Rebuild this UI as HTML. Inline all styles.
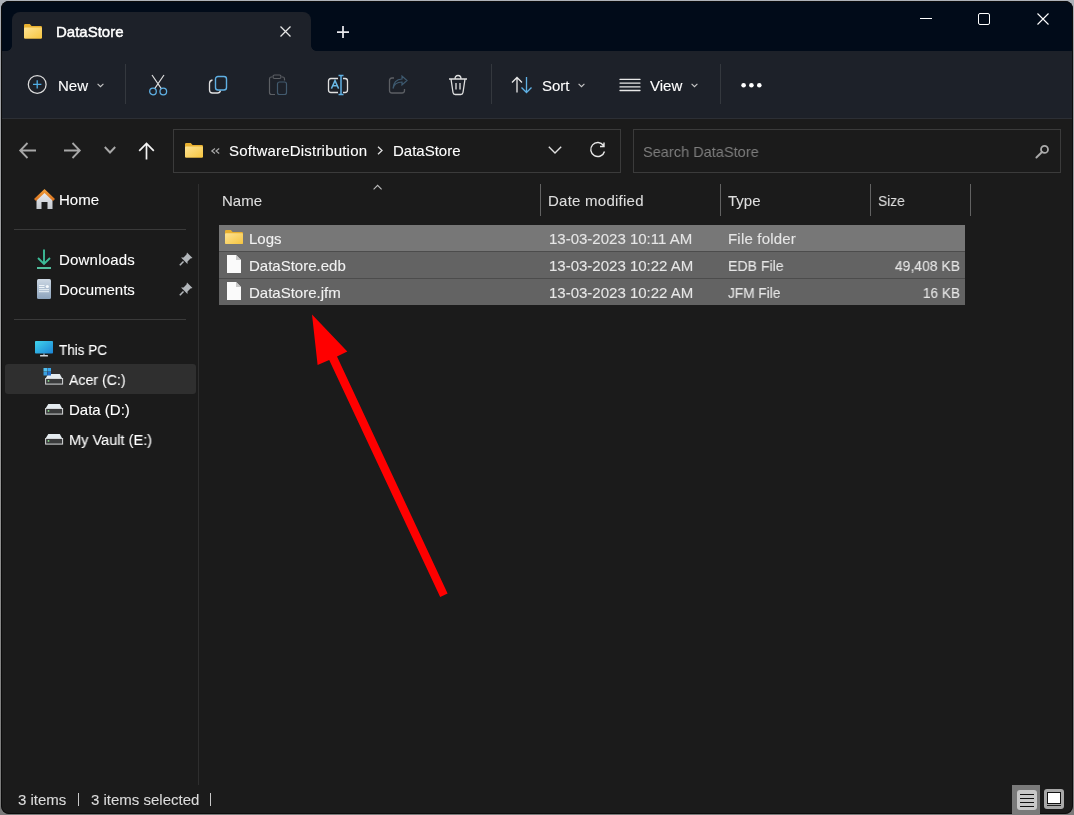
<!DOCTYPE html>
<html><head><meta charset="utf-8">
<style>
*{margin:0;padding:0;box-sizing:border-box}
html,body{width:1074px;height:815px;overflow:hidden;background:linear-gradient(#adb2b9 0,#a0a2a6 60px,#9a9a9a 400px,#7a7a7a 815px);font-family:"Liberation Sans",sans-serif}
#win{position:absolute;left:1px;top:1px;width:1072px;height:813px;border-radius:8px;overflow:hidden;background:#1b1b1b}
#title{position:absolute;left:0;top:0;width:1072px;height:50px;background:#010b19}
#tab{position:absolute;left:11px;top:11px;width:299px;height:39px;background:#1d2129;border-radius:8px 8px 0 0}
#cmd{position:absolute;left:0;top:50px;width:1072px;height:67px;background:#1d2129}
#cmdline{position:absolute;left:0;top:117px;width:1072px;height:1px;background:#2c2f35}
.t{position:absolute;white-space:nowrap;color:#fff;font-size:15px;line-height:18px;will-change:transform;-webkit-text-stroke:0.1px currentColor}
.sep{position:absolute;width:1px;background:#34383e}
svg{position:absolute;overflow:visible}
.box{position:absolute;border:1px solid #3b3b3b;background:#1b1b1b}
.hsep{position:absolute;height:1px;background:#3a3a3a}
.row{position:absolute;left:219px;width:746px;height:26px}
</style></head><body>
<div id="win">
  <div id="title"></div>
  <div id="tab"></div>
  <div id="cmd"></div>
  <div style="position:absolute;left:310px;top:45px;width:5px;height:5px;background:radial-gradient(circle at 100% 0,transparent 4.5px,#1d2129 5px)"></div>
  <div style="position:absolute;left:6px;top:45px;width:5px;height:5px;background:radial-gradient(circle at 0 0,transparent 4.5px,#1d2129 5px)"></div>
  <div id="cmdline"></div>
  <div style="position:absolute;left:0;top:0;width:1072px;height:813px;border-radius:8px;box-shadow:inset 0 0 0 1px #0c0c0c"></div>
</div>

<!-- tab folder icon -->
<svg style="left:24px;top:24px" width="18" height="14.5" viewBox="0 0 18 14.5">
  <path d="M0 1.2Q0 0 1.2 0H5.8L7.6 2H16.8Q18 2 18 3.2V13.3Q18 14.5 16.8 14.5H1.2Q0 14.5 0 13.3Z" fill="#e8b030"/>
  <rect x="0" y="3.4" width="18" height="11.1" rx="1" fill="url(#fg)"/>
</svg>
<div class="t" style="left:56px;top:23px;color:#fff;-webkit-text-stroke:0.45px #fff">DataStore</div>
<!-- tab close -->
<svg style="left:280px;top:25.5px" width="11" height="11" viewBox="0 0 11 11"><path d="M0.5 0.5L10.5 10.5M10.5 0.5L0.5 10.5" stroke="#e6e6e6" stroke-width="1.25"/></svg>
<!-- plus -->
<svg style="left:337px;top:26px" width="12" height="12" viewBox="0 0 12 12"><path d="M6 0V12M0 6H12" stroke="#e8e8ec" stroke-width="1.75"/></svg>
<!-- window controls -->
<svg style="left:920px;top:18px" width="12" height="1" viewBox="0 0 12 1"><rect width="12" height="1" fill="#fff"/></svg>
<svg style="left:978px;top:13px" width="12" height="12" viewBox="0 0 12 12"><rect x="0.5" y="0.5" width="11" height="11" rx="1.5" fill="none" stroke="#fff" stroke-width="1"/></svg>
<svg style="left:1037px;top:13px" width="12" height="12" viewBox="0 0 12 12"><path d="M0.5 0.5L11.5 11.5M11.5 0.5L0.5 11.5" stroke="#fff" stroke-width="1.1"/></svg>

<!-- command bar -->
<svg style="left:27px;top:74px" width="20" height="20" viewBox="0 0 20 20"><circle cx="10.2" cy="10.4" r="8.9" fill="none" stroke="#dcdcdc" stroke-width="1.25"/><path d="M10.2 6.2V14.6M6 10.4H14.4" stroke="#50aee6" stroke-width="1.3"/></svg>
<div class="t" style="left:58px;top:77px">New</div>
<svg style="left:97px;top:83px" width="7" height="5" viewBox="0 0 7 5"><path d="M0.6 0.8L3.5 3.7L6.4 0.8" fill="none" stroke="#c8c8c8" stroke-width="1.1"/></svg>
<div class="sep" style="left:125px;top:64px;height:40px"></div>

<!-- scissors -->
<svg style="left:148px;top:74px" width="20" height="22" viewBox="0 0 20 22">
  <path d="M4 1L13.3 14.6M16 1L6.7 14.6" stroke="#dcdcdc" stroke-width="1.2" fill="none"/>
  <circle cx="5" cy="17.5" r="3.3" fill="#1d2129" stroke="#5fb0e4" stroke-width="1.3"/>
  <circle cx="15.3" cy="17.5" r="3.3" fill="#1d2129" stroke="#5fb0e4" stroke-width="1.3"/>
</svg>
<!-- copy -->
<svg style="left:208px;top:75px" width="20" height="20" viewBox="0 0 20 20">
  <path d="M4.5 5Q1.5 5.5 1.5 8.5V15Q1.5 18 4.5 18H9.5Q12 18 12.5 15.5" fill="none" stroke="#e0e0e0" stroke-width="1.3"/>
  <rect x="7.5" y="1.5" width="11" height="13.5" rx="2.5" fill="none" stroke="#5fb0e4" stroke-width="1.4"/>
</svg>
<!-- paste (disabled) -->
<svg style="left:268px;top:74px" width="20" height="22" viewBox="0 0 20 22">
  <path d="M4 3H3Q1.5 3 1.5 5V18.5Q1.5 20.5 3.5 20.5H7M14 3H15Q16.5 3 16.5 5V6.5" fill="none" stroke="#5c5f64" stroke-width="1.2"/>
  <rect x="5" y="1" width="8" height="3.5" rx="1.5" fill="none" stroke="#5c5f64" stroke-width="1.2"/>
  <rect x="9.5" y="8" width="9" height="12.5" rx="2" fill="none" stroke="#425a6e" stroke-width="1.2"/>
</svg>
<!-- rename -->
<svg style="left:327px;top:74px" width="22" height="22" viewBox="0 0 22 22">
  <path d="M11 4.5H4Q1.5 4.5 1.5 7V16Q1.5 18.5 4 18.5H11M16 4.5H18Q20.5 4.5 20.5 7V16Q20.5 18.5 18 18.5H16" fill="none" stroke="#e0e0e0" stroke-width="1.3"/>
  <path d="M4.4 14.6L8 6.6L11.6 14.6M5.7 11.7H10.3" fill="none" stroke="#6ab8e6" stroke-width="1.45"/>
  <path d="M11.5 1.5H16.5M14 1.5V20.5M11.5 20.5H16.5" fill="none" stroke="#5fb0e4" stroke-width="1.5"/>
</svg>
<!-- share (disabled) -->
<svg style="left:388px;top:75px" width="22" height="20" viewBox="0 0 22 20">
  <path d="M6 3H4Q1.5 3 1.5 5.5V15.5Q1.5 18 4 18H14Q16.5 18 16.5 15.5V14" fill="none" stroke="#5c5f64" stroke-width="1.3"/>
  <path d="M5 13.5Q6.5 7 14 7V10L19 5.5L14 1V4Q5.5 4.5 5 13.5Z" fill="none" stroke="#3e5a70" stroke-width="1.2"/>
</svg>
<!-- delete -->
<svg style="left:448px;top:74px" width="20" height="22" viewBox="0 0 20 22">
  <path d="M1 5H19M7 5Q7 1.5 10 1.5Q13 1.5 13 5M3 5L5 18.5Q5.3 20.5 7.3 20.5H12.7Q14.7 20.5 15 18.5L17 5M8 9V15.5M12 9V15.5" fill="none" stroke="#e0e0e0" stroke-width="1.3"/>
</svg>
<div class="sep" style="left:491px;top:64px;height:40px"></div>
<!-- sort -->
<svg style="left:511px;top:76px" width="22" height="18" viewBox="0 0 22 18">
  <path d="M6 16.5V1.5M1 6.5L6 1.5L11 6.5" fill="none" stroke="#e8e8e8" stroke-width="1.3"/>
  <path d="M15.5 1V16.5M10.5 11.5L15.5 16.5L20.5 11.5" fill="none" stroke="#5fb0e4" stroke-width="1.3"/>
</svg>
<div class="t" style="left:542px;top:77px">Sort</div>
<svg style="left:578px;top:83px" width="7" height="5" viewBox="0 0 7 5"><path d="M0.6 0.8L3.5 3.7L6.4 0.8" fill="none" stroke="#c8c8c8" stroke-width="1.1"/></svg>
<!-- view -->
<svg style="left:620px;top:78px" width="20" height="14" viewBox="0 0 20 14">
  <path d="M0 1.4H20M0 5.1H20M0 8.9H20M0 12.5H20" stroke="#e8e8e8" stroke-width="1.3" stroke-linecap="round"/>
</svg>
<div class="t" style="left:650px;top:77px">View</div>
<svg style="left:691px;top:83px" width="7" height="5" viewBox="0 0 7 5"><path d="M0.6 0.8L3.5 3.7L6.4 0.8" fill="none" stroke="#c8c8c8" stroke-width="1.1"/></svg>
<div class="sep" style="left:720px;top:64px;height:40px"></div>
<svg style="left:740px;top:82px" width="24" height="6" viewBox="0 0 24 6"><circle cx="3.6" cy="3.3" r="2.3" fill="#fff"/><circle cx="11.4" cy="3.3" r="2.3" fill="#fff"/><circle cx="19.3" cy="3.3" r="2.3" fill="#fff"/></svg>

<!-- address row -->
<svg style="left:19px;top:142px" width="18" height="17" viewBox="0 0 18 17"><path d="M17 8.5H1.5M8.5 1L1.2 8.5L8.5 16" fill="none" stroke="#a8a8a8" stroke-width="1.8"/></svg>
<svg style="left:63px;top:142px" width="18" height="17" viewBox="0 0 18 17"><path d="M1 8.5H16.5M9.5 1L16.8 8.5L9.5 16" fill="none" stroke="#a8a8a8" stroke-width="1.8"/></svg>
<svg style="left:104px;top:146px" width="12" height="8" viewBox="0 0 12 8"><path d="M0.8 1L6 6.5L11.2 1" fill="none" stroke="#a8a8a8" stroke-width="1.9"/></svg>
<svg style="left:138px;top:142px" width="17" height="18" viewBox="0 0 17 18"><path d="M8.5 17.5V1.8M1.2 8.8L8.5 1.5L15.8 8.8" fill="none" stroke="#f4f4f4" stroke-width="1.7"/></svg>

<div class="box" style="left:173px;top:129px;width:448px;height:44px"></div>
<svg style="left:185px;top:142.7px" width="18" height="14.5" viewBox="0 0 18 14.5">
  <defs><linearGradient id="fg" x1="0" y1="0" x2="1" y2="1"><stop offset="0" stop-color="#fde394"/><stop offset="1" stop-color="#f6c540"/></linearGradient></defs>
  <path d="M0 1.2Q0 0 1.2 0H5.8L7.6 2H16.8Q18 2 18 3.2V13.3Q18 14.5 16.8 14.5H1.2Q0 14.5 0 13.3Z" fill="#e8b030"/>
  <rect x="0" y="3.4" width="18" height="11.1" rx="1" fill="url(#fg)"/>
</svg>
<svg style="left:211px;top:147.5px" width="9" height="6" viewBox="0 0 9 6"><path d="M4 0.5L0.8 3L4 5.5M8.2 0.5L5 3L8.2 5.5" fill="none" stroke="#a8a8a8" stroke-width="1.2"/></svg>
<div class="t" style="left:229px;top:142px;letter-spacing:0.2px">SoftwareDistribution</div>
<svg style="left:377px;top:146px" width="6" height="9" viewBox="0 0 6 9"><path d="M1 0.8L5 4.5L1 8.2" fill="none" stroke="#e0e0e0" stroke-width="1.3"/></svg>
<div class="t" style="left:393px;top:142px">DataStore</div>
<svg style="left:548px;top:146px" width="14" height="8" viewBox="0 0 14 8"><path d="M0.8 0.8L7 7L13.2 0.8" fill="none" stroke="#e0e0e0" stroke-width="1.4"/></svg>
<svg style="left:589px;top:142px" width="18" height="16" viewBox="0 0 18 16"><path d="M14.5 3.5A7 7 0 1 0 15.5 9.5M15 0.5V4.5H11" fill="none" stroke="#e8e8e8" stroke-width="1.4"/></svg>

<div class="box" style="left:633px;top:129px;width:428px;height:44px"></div>
<div class="t" style="left:643px;top:143px;color:#7e7e7e;-webkit-text-stroke:0;transform:scaleX(0.97);transform-origin:0 0">Search DataStore</div>
<svg style="left:1035px;top:145px" width="14" height="14" viewBox="0 0 14 14"><circle cx="9.5" cy="4.4" r="3.5" fill="none" stroke="#ababab" stroke-width="1.8"/><path d="M7 7L1.4 12.5" stroke="#ababab" stroke-width="1.9" stroke-linecap="round"/></svg>

<!-- nav pane -->
<div class="sep" style="left:198px;top:184px;height:601px;background:#2e2e2e"></div>
<svg style="left:34px;top:188px" width="21" height="22" viewBox="0 0 21 22">
  <defs><linearGradient id="hg" x1="0" y1="0" x2="0" y2="1"><stop offset="0" stop-color="#eceef2"/><stop offset="1" stop-color="#c4c8ce"/></linearGradient>
  <linearGradient id="rg" x1="0" y1="0" x2="0" y2="1"><stop offset="0" stop-color="#f2a03a"/><stop offset="1" stop-color="#d8701e"/></linearGradient></defs>
  <path d="M2.5 10L10.5 3L18.5 10V21H13.5V14H7.5V21H2.5Z" fill="url(#hg)"/>
  <path d="M0 11L10.5 1L21 11L19 13L10.5 5L2 13Z" fill="url(#rg)"/>
</svg>
<div class="t" style="left:59px;top:191px">Home</div>
<div class="hsep" style="left:14px;top:229px;width:172px"></div>
<svg style="left:36px;top:249px" width="16" height="21" viewBox="0 0 16 21">
  <path d="M8 0.5V15M2 9L8 15L14 9" fill="none" stroke="#3cbc98" stroke-width="1.9"/>
  <rect x="1" y="18" width="14" height="2" fill="#52bf9e"/>
</svg>
<div class="t" style="left:59px;top:251px;letter-spacing:0.2px">Downloads</div>
<svg style="left:179px;top:252px" width="14" height="14" viewBox="0 0 14 14"><path d="M8 0.5L13.5 6L11.5 6.5L8.5 9.5L8.5 12L2 5.5L4.5 5.5L7.5 2.5Z" fill="#b2b6ba"/><path d="M4.5 9.5L0.8 13.2" stroke="#b2b6ba" stroke-width="1.6"/></svg>
<svg style="left:37px;top:279px" width="14" height="20" viewBox="0 0 14 20">
  <defs><linearGradient id="dg" x1="0" y1="0" x2="0" y2="1"><stop offset="0" stop-color="#cdd8e4"/><stop offset="1" stop-color="#8ca3bc"/></linearGradient></defs>
  <rect x="0" y="0" width="14" height="20" rx="1.5" fill="url(#dg)"/>
  <path d="M2 6.5H7.5M2 8.5H7.5M2 10.7H12M2 12.7H12" stroke="#f4f8fc" stroke-width="0.9"/>
  <circle cx="10.3" cy="7.5" r="1.6" fill="#f4f8fc"/>
</svg>
<div class="t" style="left:59px;top:281px">Documents</div>
<svg style="left:179px;top:282px" width="14" height="14" viewBox="0 0 14 14"><path d="M8 0.5L13.5 6L11.5 6.5L8.5 9.5L8.5 12L2 5.5L4.5 5.5L7.5 2.5Z" fill="#b2b6ba"/><path d="M4.5 9.5L0.8 13.2" stroke="#b2b6ba" stroke-width="1.6"/></svg>
<div class="hsep" style="left:14px;top:319px;width:172px"></div>
<svg style="left:35px;top:341px" width="18" height="16" viewBox="0 0 18 16">
  <defs><linearGradient id="pg" x1="0" y1="0" x2="1" y2="1"><stop offset="0" stop-color="#40d4ec"/><stop offset="1" stop-color="#1c84d6"/></linearGradient></defs>
  <rect x="0" y="0" width="18" height="12.5" rx="0.8" fill="url(#pg)"/>
  <rect x="8.3" y="12.5" width="1.4" height="1.5" fill="#8aa8c0"/>
  <rect x="5" y="14" width="8" height="1.6" rx="0.5" fill="#d0d4da"/>
</svg>
<div class="t" style="left:59px;top:341px;transform:scaleX(0.9);transform-origin:0 0">This PC</div>
<div style="position:absolute;left:5px;top:364px;width:191px;height:30px;background:#2f2f2f;border-radius:3px"></div>
<svg style="left:44px;top:373px" width="20" height="12" viewBox="0 0 20 12">
  <path d="M4.3 1H15.8L18 5H1.8Z" fill="#e4ebef"/>
  <rect x="1.6" y="5.5" width="17" height="5.6" fill="#3a3b3c" stroke="#d4d6d8" stroke-width="1"/>
  <circle cx="4.5" cy="7.9" r="0.9" fill="#8fdc8f"/>
</svg>
<svg style="left:43px;top:368px" width="9" height="9" viewBox="0 0 9 9">
  <rect x="0.5" y="0" width="3.6" height="3.6" fill="#52c0f0"/><rect x="4.4" y="0" width="3.6" height="3.6" fill="#3aa8ec"/>
  <rect x="0.5" y="3.9" width="3.6" height="3.6" fill="#3aa0e0"/><rect x="4.4" y="3.9" width="3.6" height="3.6" fill="#2070d0"/>
</svg>
<div class="t" style="left:69px;top:371px;transform:scaleX(0.943);transform-origin:0 0">Acer (C:)</div>
<svg style="left:44px;top:403px" width="20" height="12" viewBox="0 0 20 12">
  <path d="M4.3 1H15.8L18 5H1.8Z" fill="#e4ebef"/>
  <rect x="1.6" y="5.5" width="17" height="5.6" fill="#3a3b3c" stroke="#d4d6d8" stroke-width="1"/>
  <circle cx="4.5" cy="7.9" r="0.9" fill="#8fdc8f"/>
</svg>
<div class="t" style="left:69px;top:401px">Data (D:)</div>
<svg style="left:44px;top:433px" width="20" height="12" viewBox="0 0 20 12">
  <path d="M4.3 1H15.8L18 5H1.8Z" fill="#e4ebef"/>
  <rect x="1.6" y="5.5" width="17" height="5.6" fill="#3a3b3c" stroke="#d4d6d8" stroke-width="1"/>
  <circle cx="4.5" cy="7.9" r="0.9" fill="#8fdc8f"/>
</svg>
<div class="t" style="left:69px;top:431px;transform:scaleX(0.97);transform-origin:0 0">My Vault (E:)</div>

<!-- content header -->
<svg style="left:373px;top:184px" width="10" height="7" viewBox="0 0 10 7"><path d="M0.6 5.4L4.6 1.4L8.6 5.4" fill="none" stroke="#bdbdbd" stroke-width="1.1"/></svg>
<div class="t" style="left:222px;top:192px;color:#dedede">Name</div>
<div class="sep" style="left:540px;top:184px;height:32px;background:#626262"></div>
<div class="t" style="left:548px;top:192px;color:#dedede;letter-spacing:0.25px">Date modified</div>
<div class="sep" style="left:720px;top:184px;height:32px;background:#626262"></div>
<div class="t" style="left:728px;top:192px;color:#dedede">Type</div>
<div class="sep" style="left:870px;top:184px;height:32px;background:#626262"></div>
<div class="t" style="left:878px;top:192px;color:#dedede;transform:scaleX(0.92);transform-origin:0 0">Size</div>
<div class="sep" style="left:970px;top:184px;height:32px;background:#626262"></div>

<!-- rows -->
<div class="row" style="top:225px;background:#777777"></div>
<div class="row" style="top:252px;background:#636363"></div>
<div class="row" style="top:279px;background:#636363"></div>
<div style="position:absolute;left:219px;top:251px;width:746px;height:1px;background:#4c4c4c"></div>
<div style="position:absolute;left:219px;top:278px;width:746px;height:1px;background:#4c4c4c"></div>

<svg style="left:225px;top:230px" width="18" height="14" viewBox="0 0 18 14">
  <path d="M0 1.2Q0 0 1.2 0H5.8L7.6 2H16.8Q18 2 18 3.2V12.8Q18 14 16.8 14H1.2Q0 14 0 12.8Z" fill="#e8b030"/>
  <rect x="0" y="3.3" width="18" height="10.7" rx="1" fill="url(#fg)"/>
</svg>
<div class="t" style="left:249px;top:230px;color:#f2f2f2">Logs</div>
<div class="t" style="left:549px;top:230px;color:#e6e6e6">13-03-2023 10:11 AM</div>
<div class="t" style="left:728px;top:230px;color:#e6e6e6;letter-spacing:0.2px">File folder</div>

<svg style="left:227px;top:255px" width="14" height="18" viewBox="0 0 14 18"><path d="M0 0H9L14 5V18H0Z" fill="#fafafa"/><path d="M9 0V5H14" fill="#c8c8c8"/></svg>
<div class="t" style="left:249px;top:257px;color:#f2f2f2">DataStore.edb</div>
<div class="t" style="left:549px;top:257px;color:#e6e6e6">13-03-2023 10:22 AM</div>
<div class="t" style="left:728px;top:257px;color:#e6e6e6;transform:scaleX(0.94);transform-origin:0 0">EDB File</div>
<div class="t" style="left:890px;top:257px;width:70px;text-align:right;color:#e6e6e6;transform:scaleX(0.93);transform-origin:100% 0">49,408 KB</div>

<svg style="left:227px;top:282px" width="14" height="18" viewBox="0 0 14 18"><path d="M0 0H9L14 5V18H0Z" fill="#fafafa"/><path d="M9 0V5H14" fill="#c8c8c8"/></svg>
<div class="t" style="left:249px;top:284px;color:#f2f2f2">DataStore.jfm</div>
<div class="t" style="left:549px;top:284px;color:#e6e6e6">13-03-2023 10:22 AM</div>
<div class="t" style="left:728px;top:284px;color:#e6e6e6;transform:scaleX(0.91);transform-origin:0 0">JFM File</div>
<div class="t" style="left:890px;top:284px;width:70px;text-align:right;color:#e6e6e6;transform:scaleX(0.91);transform-origin:100% 0">16 KB</div>

<!-- status bar -->
<div class="t" style="left:18px;top:791px;color:#dcdcdc">3 items</div>
<div style="position:absolute;left:78px;top:793px;width:1px;height:13px;background:#c8c8c8"></div>
<div class="t" style="left:91px;top:791px;color:#dcdcdc">3 items selected</div>
<div style="position:absolute;left:210px;top:793px;width:1px;height:13px;background:#c8c8c8"></div>

<!-- view toggles -->
<div style="position:absolute;left:1012px;top:785px;width:28px;height:30px;background:#7a7a7a"></div>
<div style="position:absolute;left:1017px;top:790px;width:20px;height:20px;background:#c8c8c8;border-radius:3px"></div>
<svg style="left:1020px;top:794px" width="14" height="13" viewBox="0 0 14 13"><path d="M0 0.5H14M0 4.5H14M0 8.5H14M0 12.5H14" stroke="#111" stroke-width="1.2"/></svg>
<div style="position:absolute;left:1044px;top:789px;width:20px;height:20px;background:#a8a8a8;border-radius:3px"></div>
<div style="position:absolute;left:1047px;top:792px;width:14px;height:12px;background:#fff;border:1.5px solid #111"></div>
<div style="position:absolute;left:1047px;top:805px;width:14px;height:1px;background:#222"></div>

<!-- red arrow -->
<svg style="left:0;top:0" width="1074" height="815" viewBox="0 0 1074 815">
  <path d="M440.2 597.1L447.6 593.4L337 356.5L347.3 351.4L312 314.5L317.6 365.1L329.2 360Z" fill="#ff0000"/>
</svg>
</body></html>
